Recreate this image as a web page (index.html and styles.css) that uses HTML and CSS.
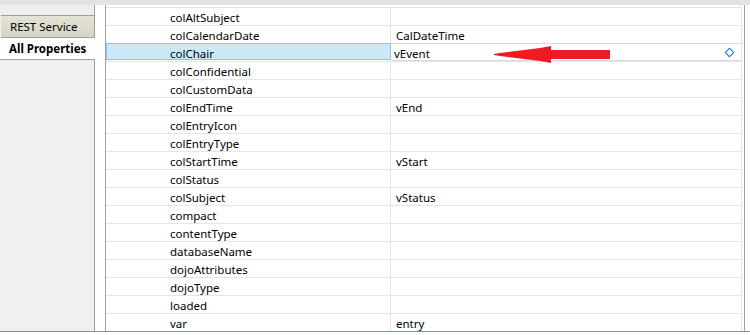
FILE: index.html
```html
<!DOCTYPE html>
<html>
<head>
    <title>Properties</title>
    <link rel="stylesheet" href="styles.css">
</head>
<body>
    <div class="top-bar"></div>
    <div class="view">
        <div class="tabs">
            <div class="tab tab-cut"></div>
            <div class="tab">REST Service</div>
            <div class="tab tab-active">All Properties</div>
            <div class="tabs-rest"></div>
        </div>

        <div class="gap"></div>

        <div class="grid-wrap">
            <div class="grid">
                <div class="row"><div class="name">colAltSubject</div><div class="value"></div></div>
                <div class="row"><div class="name">colCalendarDate</div><div class="value">CalDateTime</div></div>
                <div class="row row-selected"><div class="name">colChair</div><div class="value">vEvent<span class="marker"></span></div></div>
                <div class="row"><div class="name">colConfidential</div><div class="value"></div></div>
                <div class="row"><div class="name">colCustomData</div><div class="value"></div></div>
                <div class="row"><div class="name">colEndTime</div><div class="value">vEnd</div></div>
                <div class="row"><div class="name">colEntryIcon</div><div class="value"></div></div>
                <div class="row"><div class="name">colEntryType</div><div class="value"></div></div>
                <div class="row"><div class="name">colStartTime</div><div class="value">vStart</div></div>
                <div class="row"><div class="name">colStatus</div><div class="value"></div></div>
                <div class="row"><div class="name">colSubject</div><div class="value">vStatus</div></div>
                <div class="row"><div class="name">compact</div><div class="value"></div></div>
                <div class="row"><div class="name">contentType</div><div class="value"></div></div>
                <div class="row"><div class="name">databaseName</div><div class="value"></div></div>
                <div class="row"><div class="name">dojoAttributes</div><div class="value"></div></div>
                <div class="row"><div class="name">dojoType</div><div class="value"></div></div>
                <div class="row"><div class="name">loaded</div><div class="value"></div></div>
                <div class="row"><div class="name">var</div><div class="value">entry</div></div>
            </div>

            <!-- red arrow pointing at the selected value -->
            <svg class="arrow" width="120" height="20" viewBox="0 0 120 20">
                <polygon points="0,8 6,7 14,6 22,5 30,4 38,3 46,2 57,0 57,4 116,4 116,13 57,13 57,17 46,15 38,14 30,13 22,12 14,11 6,10 0,9" fill="#ed1c24"/>
            </svg>
        </div>
        <div class="scroll-edge"></div>
    </div>
    <div class="bottom-line"></div>
</body>
</html>
```

FILE: styles.css
```css
body {
    margin: 0;
    font-family: "Noto Sans", "Open Sans", sans-serif;
    font-size: 11.5px;
    color: #000;
    background: white;
    width: 750px;
    height: 335px;
    overflow: hidden;
}
.top-bar {
    height: 5px;
    background: #e3e3e3;
}
.view {
    display: flex;
    height: 326px;
}
.tabs {
    width: 94px;
    display: flex;
    flex-direction: column;
    border-right: 1px solid #a0a0a0;
    background: #f0f0f0;
}
.tab {
    height: 21px;
    line-height: 22px;
    padding-left: 9px;
    margin-left: 1px;
    border-bottom: 1px solid #a0a0a0;
    background: linear-gradient(#e4e3d8, #d6d4c4);
    color: #000;
    white-space: nowrap;
}
.tab-cut {
    height: 10px;
    background: #eeeeee;
}
.tab-active {
    background: white;
    font-weight: bold;
    margin-right: -1px;
    margin-left: 0;
    padding-left: 9px;
}
.tabs-rest {
    flex: 1;
}
.gap {
    width: 10px;
    background: white;
}
.grid-wrap {
    position: relative;
    width: 635px;
    border-left: 1px solid #a0a0a0;
    border-right: 1px solid #e5e5e5;
    overflow: hidden;
}
.grid {
    padding-top: 2px;
}
.row {
    display: flex;
    height: 17px;
    border-top: 1px solid #e5e5e5;
    line-height: 19px;
}
.name {
    width: 285px;
    padding-left: 64px;
    box-sizing: border-box;
    border-right: 1px solid #e5e5e5;
}
.value {
    flex: 1;
    position: relative;
    padding-left: 5px;
}
.row-selected {
    border-top-color: #d9d9d9;
}
.row-selected .name {
    background: #cbe8f6;
    border: 1px solid #8fc3e6;
    margin-top: -1px;
    height: 17px;
    padding-left: 63px;
}
.row-selected .value {
    border-bottom: 1px solid #d9d9d9;
    padding-left: 3px;
}
.marker {
    position: absolute;
    right: 8px;
    top: 5px;
    width: 5px;
    height: 5px;
    border: 1.5px solid #0a74d0;
    transform: rotate(45deg);
}
.arrow {
    position: absolute;
    left: 388px;
    top: 41px;
}
.scroll-edge {
    width: 2px;
    border-right: 1px solid #a0a0a0;
}
.bottom-line {
    height: 1px;
    background: #7a93aa;
}
```
